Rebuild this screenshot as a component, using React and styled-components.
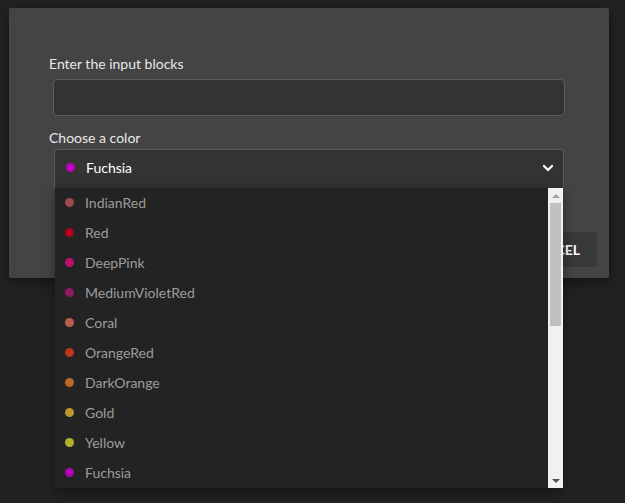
import React, { useState } from "react";
import styled, { createGlobalStyle } from "styled-components";
import { ChevronDown } from "lucide-react";

const GlobalStyle = createGlobalStyle`
  html, body {
    margin: 0;
    background: #222222;
    font-family: Lato, "Noto Sans", sans-serif;
  }
  * { box-sizing: border-box; }
`;

const Page = styled.div`
  padding: 8px 0 0 9px;
  min-height: 503px;
`;

const Modal = styled.div`
  width: 600px;
  background: #444444;
  border-radius: 2px;
  padding: 47px 12px 11px 40px;
  box-shadow: 0 4px 14px rgba(0, 0, 0, 0.45);
`;

const Fields = styled.div`
  padding-right: 28px;
`;

const Label = styled.div`
  font-size: 14px;
  line-height: 17px;
  color: #e8e8e8;
  margin-bottom: ${(p) => p.gap || 7}px;
`;

const TextInput = styled.input`
  display: block;
  width: calc(100% - 8px);
  margin: 0 4px 13px;
  height: 37px;
  background: #333333;
  border: 1px solid #5c5c5c;
  border-radius: 4px;
  color: #eee;
  font-family: inherit;
  font-size: 14px;
  padding: 0 12px;
  outline: none;
`;

const SelectWrap = styled.div`
  position: relative;
  margin: 0 5px;
`;

const SelectBox = styled.div`
  height: 39px;
  display: flex;
  align-items: center;
  gap: 11px;
  padding: 0 7px 2px 11px;
  background: #333333;
  border: 1px solid #5c5c5c;
  border-bottom-color: #333333;
  border-radius: 4px 4px 0 0;
  color: #ffffff;
  font-size: 14px;
`;

const Dot = styled.span`
  width: 9px;
  height: 9px;
  border-radius: 50%;
  flex: none;
  background: ${(p) => p.color};
`;

const Value = styled.span`
  flex: 1;
`;

const Menu = styled.div`
  position: absolute;
  top: 100%;
  left: 1px;
  right: 1px;
  height: 300px;
  display: flex;
  overflow: hidden;
  background: #232323;
  box-shadow: 0 4px 12px rgba(0, 0, 0, 0.4);
  z-index: 5;
`;

const OptionList = styled.ul`
  flex: 1;
  margin: 0;
  padding: 0;
  list-style: none;
`;

const Option = styled.li`
  height: 30px;
  display: flex;
  align-items: center;
  gap: 11px;
  padding: 0 0 2px 10px;
  font-size: 14px;
  color: #9c9c9c;
  cursor: pointer;
`;

const ScrollTrack = styled.div`
  width: 15px;
  flex: none;
  background: #f1f1f1;
  display: flex;
  flex-direction: column;
  align-items: center;
`;

const Arrow = styled.div`
  height: 15px;
  display: flex;
  align-items: center;
  justify-content: center;

  &::before {
    content: "";
    border-left: 4px solid transparent;
    border-right: 4px solid transparent;
    ${(p) =>
      p.down
        ? "border-top: 4px solid #505050;"
        : "border-bottom: 4px solid #a3a3a3;"}
  }
`;

const Thumb = styled.div`
  width: 11px;
  height: 123px;
  background: #c1c1c1;
`;

const TrackRest = styled.div`
  flex: 1;
`;

const Footer = styled.div`
  display: flex;
  justify-content: flex-end;
  gap: 8px;
  margin-top: 44px;
`;

const Button = styled.button`
  height: 35px;
  padding: 0 17px;
  background: #383838;
  border: none;
  border-radius: 3px;
  color: #ffffff;
  font-family: inherit;
  font-weight: 700;
  font-size: 14px;
  text-transform: uppercase;
`;

const colors = [
  ["IndianRed", "#9c4b4b"],
  ["Red", "#b0001e"],
  ["DeepPink", "#b8136e"],
  ["MediumVioletRed", "#8e1a60"],
  ["Coral", "#b8604a"],
  ["OrangeRed", "#b8371e"],
  ["DarkOrange", "#b8692a"],
  ["Gold", "#b8982f"],
  ["Yellow", "#b0b030"],
  ["Fuchsia", "#b000b0"],
];

const App = () => {
  const [selected, setSelected] = useState("Fuchsia");
  return (
    <Page>
      <GlobalStyle />
      <Modal>
        <Fields>
          <Label>Enter the input blocks</Label>
          <TextInput type="text" />
          <Label gap={3}>Choose a color</Label>
          <SelectWrap>
            <SelectBox>
              <Dot color="#c000c0" />
              <Value>{selected}</Value>
              <ChevronDown size={16} strokeWidth={3.5} color="#ffffff" />
            </SelectBox>
            <Menu>
              <OptionList>
                {colors.map(([name, c]) => (
                  <Option key={name} onClick={() => setSelected(name)}>
                    <Dot color={c} />
                    {name}
                  </Option>
                ))}
              </OptionList>
              <ScrollTrack>
                <Arrow />
                <Thumb />
                <TrackRest />
                <Arrow down />
              </ScrollTrack>
            </Menu>
          </SelectWrap>
        </Fields>
        <Footer>
          <Button>Ok</Button>
          <Button>Cancel</Button>
        </Footer>
      </Modal>
    </Page>
  );
};

export default App;
